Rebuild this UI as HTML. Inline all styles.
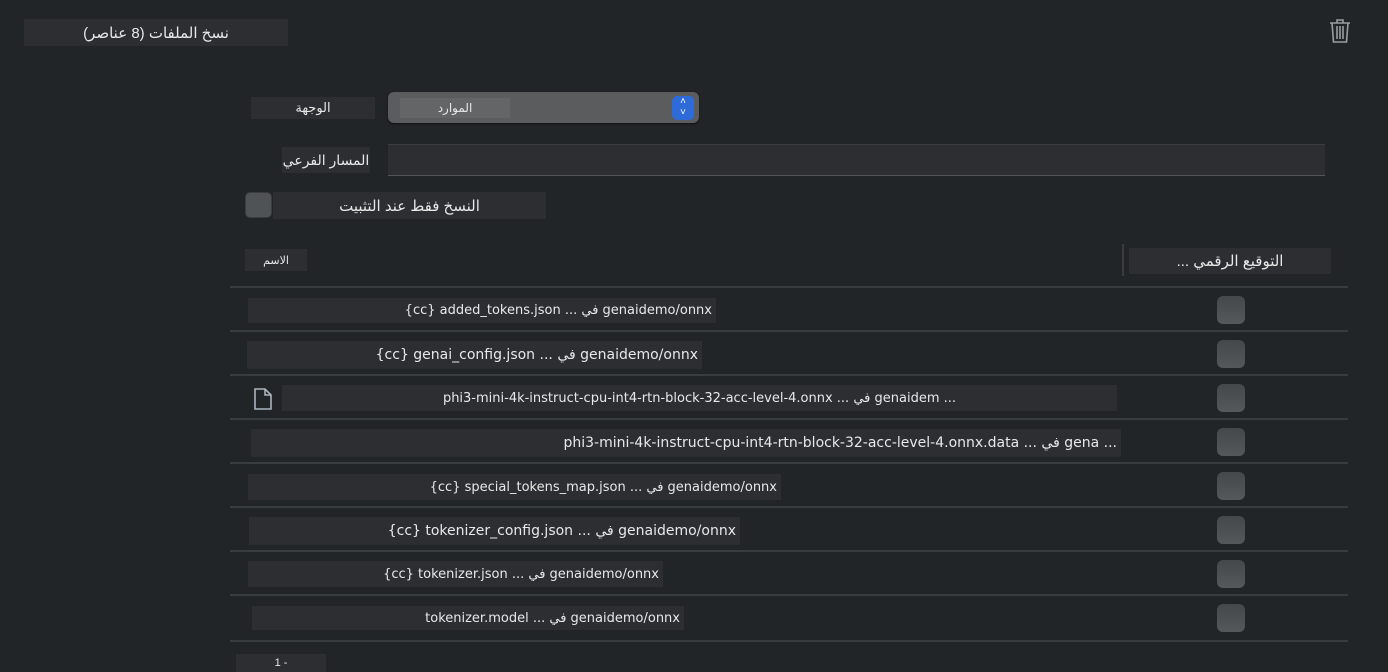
<!DOCTYPE html>
<html><head><meta charset="utf-8"><style>
body{margin:0;width:1388px;height:672px;background:#222528;position:relative;overflow:hidden;font-family:"Liberation Sans","DejaVu Sans","Noto Sans CJK SC",sans-serif;color:#e8e8e8}
.a{position:absolute}
.box{position:absolute;background:#2c2e31;display:flex;align-items:center;white-space:nowrap;overflow:hidden}
.c{justify-content:center}
.r{justify-content:flex-end;padding-right:4px;box-sizing:border-box}
.line{position:absolute;left:230px;width:1118px;height:2px;background:#3a3d40}
.cb{position:absolute;left:1217px;width:28px;height:28px;border-radius:6px;background:linear-gradient(#45484b,#55585b);}
.t{font-size:13px;direction:ltr;font-family:"DejaVu Sans",sans-serif}
</style></head><body>
<div class="box c" style="left:24px;top:19px;width:264px;height:27px;font-size:15px" dir="rtl">نسخ الملفات (8 عناصر)</div>
<svg class="a" style="left:1328px;top:18px" width="24" height="26" viewBox="0 0 24 26" fill="none" stroke="#9a9da0" stroke-width="1.6"><path d="M2 5h20M9 5V2h6v3M4 5l1.5 19h13L20 5M9 8v13M12 8v13M15 8v13"/></svg>
<div class="box c" style="left:251px;top:97px;width:124px;height:22px;font-size:13px">الوجهة</div>
<div class="a" style="left:388px;top:92px;width:311px;height:31px;border-radius:6px;background:#5b5c5e;box-shadow:0 1px 2px #111"></div>
<div class="box c" style="left:400px;top:98px;width:110px;height:20px;background:#646567;font-size:12px">الموارد</div>
<div class="a" style="left:672px;top:96px;width:22px;height:24px;border-radius:5px;background:#2f6ad9;color:#fff;font-size:10px;line-height:11px;text-align:center">˄<br>˅</div>
<div class="box c" style="left:282px;top:147px;width:88px;height:26px;font-size:14px">المسار الفرعي</div>
<div class="a" style="left:388px;top:144px;width:937px;height:30px;background:#2c2e31;border-bottom:1px solid #555;border-top:1px solid #3a3c3f"></div>
<div class="a" style="left:245px;top:192px;width:25px;height:24px;border-radius:5px;background:#505356;border:1px solid #3a3c3f"></div>
<div class="box c" style="left:273px;top:192px;width:273px;height:27px;font-size:15px">النسخ فقط عند التثبيت</div>
<div class="box c" style="left:245px;top:249px;width:62px;height:22px;font-size:11px">الاسم</div>
<div class="a" style="left:1122px;top:244px;width:2px;height:32px;background:#3a3d40"></div>
<div class="box c" style="left:1129px;top:248px;width:202px;height:26px;font-size:15px" dir="rtl">التوقيع الرقمي ...</div>
<div class="line" style="top:286px"></div>
<div class="line" style="top:330px"></div>
<div class="line" style="top:374px"></div>
<div class="line" style="top:418px"></div>
<div class="line" style="top:462px"></div>
<div class="line" style="top:506px"></div>
<div class="line" style="top:550px"></div>
<div class="line" style="top:594px"></div>
<div class="line" style="top:640px"></div>
<div class="box r t" style="left:248px;top:298px;width:468px;height:25px">{cc} added_tokens.json ... في genaidemo/onnx</div>
<div class="box r t" style="left:247px;top:341px;width:455px;height:28px;font-size:14px">{cc} genai_config.json ... في genaidemo/onnx</div>
<svg class="a" style="left:253px;top:387px" width="20" height="24" viewBox="0 0 20 24" fill="none" stroke="#aab4be" stroke-width="1.6"><path d="M2 2h10l6 6v14H2z M12 2v6h6"/></svg>
<div class="box c t" style="left:282px;top:385px;width:835px;height:26px">phi3-mini-4k-instruct-cpu-int4-rtn-block-32-acc-level-4.onnx ... في genaidem ...</div>
<div class="box r t" style="left:251px;top:429px;width:870px;height:28px;font-size:14px">phi3-mini-4k-instruct-cpu-int4-rtn-block-32-acc-level-4.onnx.data ... في gena ...</div>
<div class="box r t" style="left:248px;top:474px;width:533px;height:26px">{cc} special_tokens_map.json ... في genaidemo/onnx</div>
<div class="box r t" style="left:249px;top:517px;width:491px;height:28px;font-size:14px">{cc} tokenizer_config.json ... في genaidemo/onnx</div>
<div class="box r t" style="left:248px;top:561px;width:415px;height:26px">{cc} tokenizer.json ... في genaidemo/onnx</div>
<div class="box r t" style="left:252px;top:606px;width:432px;height:24px;font-size:13px">tokenizer.model ... في genaidemo/onnx</div>
<div class="cb" style="top:296px"></div>
<div class="cb" style="top:340px"></div>
<div class="cb" style="top:384px"></div>
<div class="cb" style="top:428px"></div>
<div class="cb" style="top:472px"></div>
<div class="cb" style="top:516px"></div>
<div class="cb" style="top:560px"></div>
<div class="cb" style="top:604px"></div>
<div class="box c" style="left:236px;top:654px;width:90px;height:18px;font-size:11px;direction:ltr;unicode-bidi:isolate">1&nbsp;-</div>
</body></html>
